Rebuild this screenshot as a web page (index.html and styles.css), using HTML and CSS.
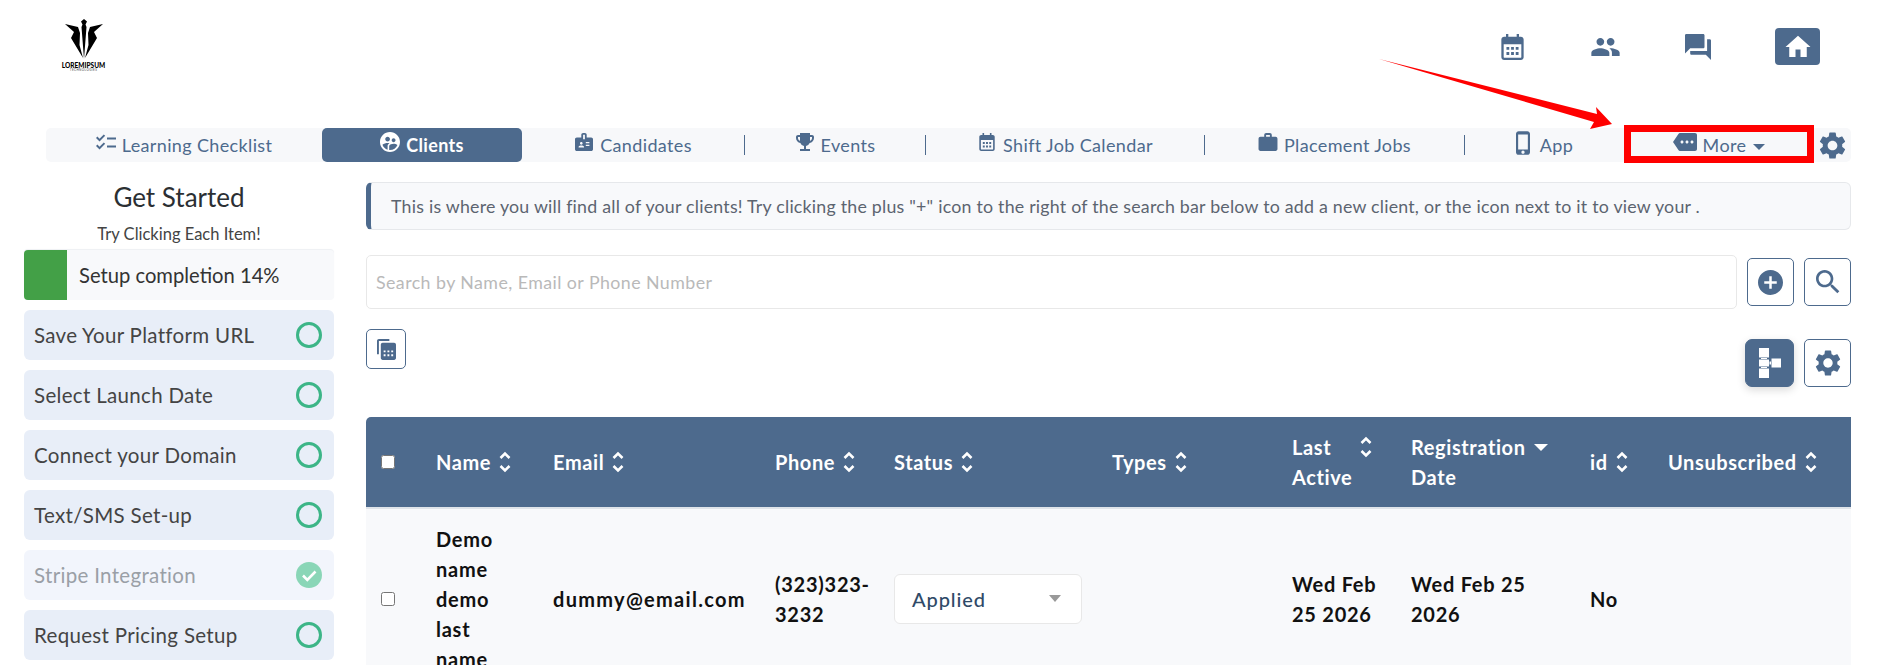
FILE: index.html
```html
<!DOCTYPE html>
<html lang="en">
<head>
<meta charset="utf-8">
<title>Clients</title>
<link rel="stylesheet" href="styles.css">
</head>
<body>
<svg width="0" height="0" class="defs">
  <defs>
    <symbol id="sort" viewBox="0 0 12 22"><path d="M1.500 7 6 2.500 10.500 7M1.500 15 6 19.500 10.500 15" fill="none" stroke="currentColor" stroke-width="2.600"/></symbol>
    <symbol id="gear" viewBox="2 2 20 20"><path d="M19.140 12.940c.04-.3.06-.61.06-.94 0-.32-.02-.64-.07-.94l2.030-1.580c.18-.14.23-.41.12-.61l-1.920-3.320c-.12-.22-.37-.29-.59-.22l-2.390.96c-.5-.38-1.030-.7-1.620-.94l-.36-2.540c-.04-.24-.24-.41-.48-.41h-3.840c-.24 0-.43.17-.47.41l-.36 2.540c-.59.24-1.130.57-1.620.94l-2.390-.96c-.22-.08-.47 0-.59.22L2.740 8.870c-.12.21-.08.47.12.61l2.030 1.580c-.05.3-.09.63-.09.94s.02.64.07.94l-2.030 1.580c-.18.14-.23.41-.12.61l1.920 3.320c.12.22.37.29.59.22l2.390-.96c.5.38 1.030.7 1.620.94l.36 2.540c.05.24.24.41.48.41h3.840c.24 0 .44-.17.47-.41l.36-2.540c.59-.24 1.130-.56 1.620-.94l2.390.96c.22.08.47 0 .59-.22l1.920-3.320c.12-.22.07-.47-.12-.61l-2.010-1.580zM12 15.600c-1.980 0-3.600-1.620-3.600-3.600s1.620-3.600 3.600-3.600 3.600 1.620 3.600 3.600-1.620 3.600-3.600 3.600z"/></symbol>
    <symbol id="calendar" viewBox="0 0 24 28"><path fill-rule="evenodd" d="M5 0h2.500v3h9V0H19v3h2c1.700 0 3 1.300 3 3v19c0 1.700-1.300 3-3 3H3c-1.700 0-3-1.300-3-3V6c0-1.700 1.300-3 3-3h2zM2.500 11v14c0 .3.2.5.5.5h18c.3 0 .5-.2.5-.5V11z"/><path d="M5.500 14h3v3h-3zM10.500 14h3v3h-3zM15.500 14h3v3h-3zM5.500 19.500h3v3h-3zM10.500 19.500h3v3h-3zM15.500 19.500h3v3h-3z"/></symbol>
  </defs>
</svg>

<header class="topbar">
  <div class="logo">
    <svg class="logo-mark" viewBox="0 0 38 41" aria-hidden="true"><path d="M19 0l3 2.500-1.500 3 1 2.500L19 40 16.500 8l1-2.500-1.500-3zM0 5l13 3 2 6-.5 12L18 39 6 19l3-6zM38 5l-13 3-2 6 .5 12L20 39l12-20-3-6z"/></svg>
    <span class="logo-name">LOREMIPSUM</span>
    <span class="logo-sub">TECHNOLOGIES</span>
  </div>
  <nav class="quick">
    <svg class="qi qi-cal"><use href="#calendar"/></svg>
    <svg class="qi qi-people" viewBox="1 5 22 14"><path d="M16 11c1.660 0 2.990-1.340 2.990-3S17.660 5 16 5c-1.660 0-3 1.340-3 3s1.340 3 3 3zm-8 0c1.660 0 2.990-1.340 2.990-3S9.660 5 8 5C6.340 5 5 6.340 5 8s1.340 3 3 3zm0 2c-2.330 0-7 1.170-7 3.500V19h14v-2.500c0-2.330-4.670-3.500-7-3.500zm8 0c-.29 0-.62.02-.97.05 1.160.84 1.970 1.970 1.970 3.450V19h6v-2.500c0-2.330-4.670-3.500-7-3.500z"/></svg>
    <svg class="qi qi-chat" viewBox="2 2 20 20"><path d="M21 6h-2v9H6v2c0 .55.45 1 1 1h11l4 4V7c0-.55-.45-1-1-1zm-4 6V3c0-.55-.45-1-1-1H3c-.55 0-1 .45-1 1v14l4-4h10c.55 0 1-.45 1-1z"/></svg>
    <span class="home"><svg viewBox="0 0 24 24"><path d="M10 20v-6h4v6h5v-8h3L12 3 2 12h3v8z"/></svg></span>
  </nav>
</header>

<nav class="tabs">
  <a class="tab"><svg class="ti" viewBox="2 3 20 17"><path d="M22 7h-9v2h9V7zm0 8h-9v2h9v-2zM5.540 11 2 7.460l1.410-1.410 2.120 2.120 4.240-4.240 1.410 1.410L5.540 11zm0 8L2 15.460l1.410-1.410 2.120 2.120 4.240-4.240 1.410 1.410L5.540 19z"/></svg>Learning Checklist</a>
  <a class="tab tab-active"><svg class="ti" viewBox="2 2 20 20"><path d="M11.990 2c-5.520 0-10 4.480-10 10s4.480 10 10 10 10-4.480 10-10-4.480-10-10-10zm3.610 6.340c1.070 0 1.930.86 1.930 1.930s-.86 1.930-1.930 1.930-1.930-.86-1.930-1.930c-.01-1.070.86-1.930 1.930-1.930zm-6-1.580c1.300 0 2.360 1.060 2.360 2.360s-1.060 2.360-2.360 2.360-2.360-1.060-2.360-2.360c0-1.310 1.050-2.360 2.360-2.360zm0 9.130v3.750c-2.400-.75-4.300-2.600-5.140-4.960 1.050-1.120 3.670-1.690 5.140-1.690.53 0 1.200.08 1.900.22-1.640.87-1.900 2.020-1.900 2.680zM11.990 20c-.27 0-.53-.01-.79-.04v-4.070c0-1.420 2.940-2.130 4.400-2.130 1.070 0 2.920.39 3.840 1.150-1.170 2.950-4.060 5.090-7.450 5.090z"/></svg>Clients</a>
  <a class="tab"><svg class="ti" viewBox="2 2 20 20"><path d="M20 7h-5V4c0-1.100-.9-2-2-2h-2c-1.100 0-2 .9-2 2v3H4c-1.100 0-2 .9-2 2v11c0 1.100.9 2 2 2h16c1.100 0 2-.9 2-2V9c0-1.100-.9-2-2-2zM9 12c.83 0 1.500.67 1.500 1.500S9.830 15 9 15s-1.500-.67-1.500-1.500S8.170 12 9 12zm3 6H6v-.75c0-1 2-1.500 3-1.500s3 .5 3 1.500V18zm1-9h-2V4h2v5zm5 7.500h-4V15h4v1.500zm0-3h-4V12h4v1.500z"/></svg>Candidates</a>
  <i class="sep"></i>
  <a class="tab"><svg class="ti" viewBox="3 3 18 18"><path d="M19 5h-2V3H7v2H5c-1.100 0-2 .9-2 2v1c0 2.550 1.920 4.630 4.390 4.940.63 1.500 1.980 2.630 3.610 2.960V19H7v2h10v-2h-4v-3.100c1.630-.33 2.980-1.460 3.610-2.960C19.080 12.630 21 10.550 21 8V7c0-1.100-.9-2-2-2zM5 8V7h2v3.820C5.840 10.400 5 9.300 5 8zm14 0c0 1.300-.84 2.400-2 2.820V7h2v1z"/></svg>Events</a>
  <i class="sep"></i>
  <a class="tab"><svg class="ti"><use href="#calendar"/></svg>Shift Job Calendar</a>
  <i class="sep"></i>
  <a class="tab"><svg class="ti" viewBox="2 2 20 19"><path d="M20 6h-4V4c0-1.110-.89-2-2-2h-4c-1.110 0-2 .89-2 2v2H4c-1.110 0-1.990.89-1.990 2L2 19c0 1.110.89 2 2 2h16c1.110 0 2-.89 2-2V8c0-1.110-.89-2-2-2zm-6 0h-4V4h4v2z"/></svg>Placement Jobs</a>
  <i class="sep"></i>
  <a class="tab"><svg class="ti ti-phone" viewBox="5 1 13 22"><path d="M15.500 1h-8C6.120 1 5 2.120 5 3.500v17C5 21.880 6.120 23 7.500 23h8c1.380 0 2.500-1.120 2.500-2.500v-17C18 2.120 16.880 1 15.500 1zm-4 21c-.83 0-1.500-.67-1.500-1.500s.67-1.500 1.500-1.500 1.500.67 1.500 1.500-.67 1.500-1.500 1.500zm4.500-4H7V4h9v14z"/></svg>App</a>
  <a class="tab tab-more"><svg class="ti ti-more" viewBox="0 3 24 18"><path d="M22 3H7c-.69 0-1.230.35-1.590.88L0 12l5.410 8.110c.36.53.9.89 1.590.89h15c1.100 0 2-.9 2-2V5c0-1.100-.9-2-2-2zM9 13.500c-.83 0-1.500-.67-1.500-1.500s.67-1.500 1.500-1.500 1.500.67 1.500 1.500-.67 1.500-1.500 1.500zm5 0c-.83 0-1.500-.67-1.500-1.500s.67-1.500 1.500-1.500 1.500.67 1.500 1.500-.67 1.500-1.500 1.500zm5 0c-.83 0-1.500-.67-1.500-1.500s.67-1.500 1.500-1.500 1.500.67 1.500 1.500-.67 1.500-1.500 1.500z"/></svg>More<i class="caret"></i><span class="red-box"></span></a>
  <span class="tab-gear"><svg class="ti-gear"><use href="#gear"/></svg></span>
</nav>

<div class="content">
  <aside class="side">
    <h2 class="side-title">Get Started</h2>
    <p class="side-sub">Try Clicking Each Item!</p>
    <div class="progress"><span class="progress-fill"></span><span class="progress-label">Setup completion 14%</span></div>
    <div class="step">Save Your Platform URL<i class="ring"></i></div>
    <div class="step">Select Launch Date<i class="ring"></i></div>
    <div class="step">Connect your Domain<i class="ring"></i></div>
    <div class="step">Text/SMS Set-up<i class="ring"></i></div>
    <div class="step step-done">Stripe Integration<svg class="tick" viewBox="0 0 26 26"><circle cx="13" cy="13" r="13"/><path d="M7 13.500l4.300 4.300L19.500 9.500" fill="none" stroke="#fff" stroke-width="2.600"/></svg></div>
    <div class="step">Request Pricing Setup<i class="ring"></i></div>
  </aside>

  <main class="main">
    <div class="info">This is where you will find all of your clients! Try clicking the plus "+" icon to the right of the search bar below to add a new client, or the icon next to it to view your .</div>

    <div class="search-row">
      <div class="search">Search by Name, Email or Phone Number</div>
      <button class="btn"><svg class="btn-add" viewBox="2 2 20 20"><path d="M12 2C6.480 2 2 6.480 2 12s4.480 10 10 10 10-4.480 10-10S17.520 2 12 2zm5 11h-4v4h-2v-4H7v-2h4V7h2v4h4v2z"/></svg></button>
      <button class="btn"><svg class="btn-search" viewBox="3 3 18 18"><path d="M15.500 14h-.79l-.28-.27C15.410 12.590 16 11.110 16 9.500 16 5.910 13.090 3 9.500 3S3 5.910 3 9.500 5.910 16 9.500 16c1.610 0 3.090-.59 4.230-1.570l.27.28v.79l5 4.990L20.490 19l-4.990-5zm-6 0C7.010 14 5 11.990 5 9.500S7.010 5 9.500 5 14 7.010 14 9.500 11.990 14 9.500 14z"/></svg></button>
    </div>

    <div class="tools-row">
      <button class="btn btn-calc"><svg class="calc" viewBox="0 0 20 22"><path d="M2 0h11v2H2v14H0V2C0 .9.9 0 2 0z"/><path fill-rule="evenodd" d="M6 4h12c1.100 0 2 .9 2 2v14c0 1.100-.9 2-2 2H6c-1.100 0-2-.9-2-2V6c0-1.100.9-2 2-2zm1 8v2h2v-2zm4 0v2h2v-2zm4 0v2h2v-2zM7 16v2h2v-2zm4 0v2h2v-2zm4 0v2h2v-2z"/></svg></button>
      <div class="tools-right">
        <button class="btn btn-tree"><svg class="tree" viewBox="0 0 22 30"><path d="M0 0h10v9.400H0zM0 20.600h10V30H0zM2 10h6v1H2zM0 11.500h10v7H0zM2 19h6v1H2zM10.500 13.500h1.500v3h-1.500zM12.500 10.500H22v9h-9.500z"/></svg></button>
        <button class="btn"><svg class="btn-gear"><use href="#gear"/></svg></button>
      </div>
    </div>

    <table class="grid">
      <colgroup>
        <col class="c-check"><col class="c-name"><col class="c-email"><col class="c-phone"><col class="c-status"><col class="c-types"><col class="c-last"><col class="c-reg"><col class="c-id"><col class="c-unsub">
      </colgroup>
      <thead>
        <tr>
          <th><input type="checkbox" class="check"></th>
          <th><div class="th">Name<svg class="sort"><use href="#sort"/></svg></div></th>
          <th><div class="th">Email<svg class="sort"><use href="#sort"/></svg></div></th>
          <th><div class="th">Phone<svg class="sort"><use href="#sort"/></svg></div></th>
          <th><div class="th">Status<svg class="sort"><use href="#sort"/></svg></div></th>
          <th><div class="th">Types<svg class="sort"><use href="#sort"/></svg></div></th>
          <th><div class="th th-top"><span class="th-last">Last<br>Active</span><svg class="sort"><use href="#sort"/></svg></div></th>
          <th><div class="th th-top"><span>Registration<br>Date</span><i class="caret caret-head"></i></div></th>
          <th><div class="th">id<svg class="sort"><use href="#sort"/></svg></div></th>
          <th><div class="th">Unsubscribed<svg class="sort"><use href="#sort"/></svg></div></th>
        </tr>
      </thead>
      <tbody>
        <tr>
          <td><input type="checkbox" class="check"></td>
          <td>Demo<br>name<br>demo<br>last<br>name</td>
          <td class="cell-email">dummy@email.com</td>
          <td>(323)323-<br>3232</td>
          <td><div class="status">Applied<i class="caret caret-status"></i></div></td>
          <td></td>
          <td>Wed Feb<br>25 2026</td>
          <td>Wed Feb 25<br>2026</td>
          <td>No</td>
          <td></td>
        </tr>
      </tbody>
    </table>
  </main>
</div>

<svg class="arrow" viewBox="0 0 240 75" aria-hidden="true"><path d="M0 0 L218 55 L217 48 L233 65 L211 70 L215 63 Z"/></svg>
</body>
</html>
```

FILE: styles.css
```css
* { box-sizing: border-box; }
html, body { margin: 0; height: 665px; overflow: hidden; }
body {
  position: relative;
  background: #fff;
  font-family: "Lato", "Noto Sans", sans-serif;
  color: #333;
}
.defs { position: absolute; }
svg { display: block; fill: currentColor; }

/* top bar */
.topbar {
  height: 128px;
  display: flex;
  justify-content: space-between;
  align-items: flex-start;
  padding: 19px 70px 0 62px;
  color: #4d6a8d;
}
.logo { width: 43px; display: flex; flex-direction: column; align-items: center; color: #000; }
.logo-mark { width: 38px; height: 41px; }
.logo-name { font-size: 6.500px; font-weight: 900; line-height: 7px; margin-top: 2px; white-space: nowrap; }
.logo-sub { font-size: 3px; line-height: 3px; letter-spacing: .4px; white-space: nowrap; color: #444; }
.quick { display: flex; align-items: center; margin-top: 9px; }
.qi-cal { width: 23px; height: 26px; margin-right: 67px; }
.qi-people { width: 29px; height: 18px; margin-right: 65px; }
.qi-chat { width: 26px; height: 26px; margin-right: 64px; }
.home {
  width: 45px; height: 37px;
  background: #4d6a8d; border-radius: 4px;
  display: flex; align-items: center; justify-content: center;
  color: #fff;
}
.home svg { width: 30px; height: 30px; }

/* tabs */
.tabs {
  margin: 0 39px 0 46px;
  height: 34px;
  background: #f7f8fa;
  border-radius: 5px;
  display: grid;
  grid-template-columns: 276px 200px 222px 1px 180px 1px 278px 1px 259px 1px 159px 190px 1fr;
  align-items: center;
  color: #4d6a8d;
}
.tab {
  position: relative;
  height: 34px;
  display: flex; align-items: center; justify-content: center; gap: 6px;
  font-size: 18px;
  letter-spacing: .36px;
  white-space: nowrap;
}
.tab-active { background: #4d6a8d; color: #fff; font-weight: 700; border-radius: 5px; }
.ti { width: 20px; height: 18px; margin-top: -7px; }
.tab-active .ti { height: 20px; margin-top: -6px; }
.ti-phone { width: 14px; height: 24px; margin: -5px 4px 0 0; }
.ti-more { width: 24px; height: 18px; margin-top: -7px; }
.sep { height: 20px; background: #4d6a8d; }
.caret {
  display: inline-block; width: 0; height: 0;
  border: 6px solid transparent; border-top: 6px solid currentColor; border-bottom: 0;
}
.tab-more .caret { margin: 3px 0 0 1px; }
.red-box { position: absolute; left: 0; right: 0; top: -3px; bottom: -1px; border: 7px solid #f00; }
.tab-gear { display: flex; justify-content: center; padding-right: 1px; }
.ti-gear { width: 27px; height: 27px; }

/* layout */
.content { display: flex; padding: 20px 39px 0 24px; gap: 32px; }
.side { width: 310px; flex: none; }
.side-title { margin: 0; text-align: center; font-size: 26px; font-weight: 400; line-height: 30px; color: #2b2f33; }
.side-sub { margin: 11px 0 5px; text-align: center; font-size: 16.500px; line-height: 22px; color: #444; }
.progress { height: 50px; display: flex; align-items: center; background: #f8f9fb; border-radius: 4px; box-shadow: 0 -1px 1px #eef0f3; margin-bottom: 10px; }
.progress-fill { width: 43px; height: 50px; background: #43a047; border-radius: 4px 0 0 4px; }
.progress-label { margin-left: 12px; font-size: 20.200px; color: #333; }
.step {
  height: 50px; margin-bottom: 10px; padding: 0 12px 0 10px;
  display: flex; align-items: center; justify-content: space-between;
  background: #e8eef8; border-radius: 6px;
  font-size: 20.500px; letter-spacing: .32px; color: #444;
}
.ring { width: 26px; height: 26px; border: 3px solid #3cb587; border-radius: 50%; }
.step-done { background: #f2f5fc; color: #9a9fa6; }
.tick { width: 26px; height: 26px; color: #8ad6b7; }

/* main column */
.main { flex: 1; min-width: 0; }
.info {
  height: 48px; padding-left: 20px;
  display: flex; align-items: center;
  background: #f8f9fb;
  border: 1px solid #e6e8eb; border-left: 5px solid #4d6a8d; border-radius: 6px;
  font-size: 17.800px; letter-spacing: .22px; color: #5c6470; white-space: nowrap;
}
.search-row { display: flex; align-items: center; margin-top: 25px; gap: 10px; }
.search {
  flex: 1; height: 54px; padding-left: 9px;
  display: flex; align-items: center;
  border: 1px solid #e8e8e8; border-radius: 5px;
  font-size: 17.800px; letter-spacing: .44px; color: #b9b9b9;
}
.btn {
  width: 47px; height: 48px; padding: 0;
  display: flex; align-items: center; justify-content: center;
  background: #fff; color: #4d6a8d;
  border: 1px solid #4d6a8d; border-radius: 5px;
}
.btn-add { width: 25px; height: 25px; }
.btn-search { width: 24px; height: 24px; }
.btn-gear { width: 26px; height: 26px; }
.tools-row { display: flex; justify-content: space-between; align-items: flex-start; margin-top: 20px; height: 88px; }
.btn-calc { width: 40px; height: 40px; }
.calc { width: 19px; height: 21px; }
.tools-right { display: flex; gap: 10px; margin-top: 10px; }
.btn-tree { width: 49px; background: #4d6a8d; color: #fff; box-shadow: 0 3px 8px rgba(0,0,0,.15); border-radius: 7px; }
.tree { width: 22px; height: 30px; }

/* table */
.grid { width: 1485px; border-collapse: collapse; table-layout: fixed; }
.c-check { width: 55px; } .c-name { width: 117px; } .c-email { width: 222px; } .c-phone { width: 119px; }
.c-status { width: 218px; } .c-types { width: 180px; } .c-last { width: 119px; } .c-reg { width: 179px; }
.c-id { width: 78px; } .c-unsub { width: 198px; }
.grid th {
  height: 91px; padding: 0 15px;
  background: #4d6a8d; color: #fff; text-align: left;
  font-size: 20px; font-weight: 700; line-height: 30px; letter-spacing: .6px;
  border-bottom: 2px solid #dfe4ea;
}
.grid th:first-child { border-radius: 5px 0 0 0; }
.th { display: flex; align-items: center; gap: 8px; white-space: nowrap; }
.th-top { align-items: flex-start; }
.th-last { width: 60px; }
.sort { width: 12px; height: 22px; flex: none; }
.th-top .sort { margin-top: 4px; }
.caret-head { margin-top: 12px; border-width: 7px 7px 0; }
.grid td {
  padding: 13px 15px 15px; height: 182px;
  background: #f8f9fb; color: #111;
  font-size: 20px; font-weight: 700; line-height: 30px; letter-spacing: .75px; white-space: nowrap;
}
.grid .cell-email { letter-spacing: 1.300px; }
.check { display: block; width: 14px; height: 14px; margin: 0; }
.status {
  width: 188px; height: 50px; padding: 0 20px 0 17px;
  display: flex; align-items: center; justify-content: space-between;
  background: #fff; border: 1px solid #e8e8e8; border-radius: 6px;
  color: #2f4a68; font-weight: 500; letter-spacing: .9px;
}
.caret-status { color: #999; border-width: 7px 6px 0; }

/* annotation */
.arrow { position: absolute; left: 1379px; top: 59px; width: 240px; height: 75px; color: #f00; }
```
